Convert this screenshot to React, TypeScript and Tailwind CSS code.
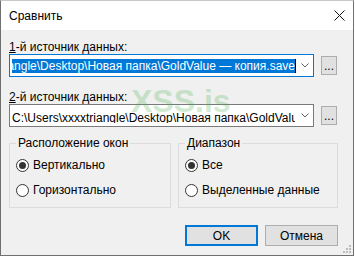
import React from "react";

const PATH_1 = "C:\\Users\\xxxxtriangle\\Desktop\\Новая папка\\GoldValue — копия.save";
const PATH_2 = "C:\\Users\\xxxxtriangle\\Desktop\\Новая папка\\GoldValue — копия.save";

function Chevron() {
  return (
    <svg width="8" height="5" viewBox="0 0 8 5" className="shrink-0">
      <path d="M0.5 0.5 L4 4 L7.5 0.5" fill="none" stroke="#606060" strokeWidth="1" />
    </svg>
  );
}

function Radio({ checked, label }: { checked: boolean; label: string }) {
  return (
    <div className="flex items-center h-[14px]">
      <div className="w-[13px] h-[13px] rounded-full border border-[#333333] bg-white flex items-center justify-center shrink-0">
        {checked && <div className="w-[7px] h-[7px] rounded-full bg-[#333333]" />}
      </div>
      <span className="ml-[4px] leading-[14px]">{label}</span>
    </div>
  );
}

export default function App() {
  return (
    <div className="w-[355px] h-[257px] bg-white font-['Liberation_Sans',Arial,sans-serif] text-[12px] text-black">
      <div className="relative w-[354px] h-[256px] flex flex-col border-l border-r border-b border-t border-[#707070] border-t-[#c8c8c8]">
        {/* title bar */}
        <div className="h-[29px] bg-white flex items-center justify-between pl-[8px] pr-[8px]">
          <span className="leading-[14px]">Сравнить</span>
          <svg width="11" height="11" viewBox="0 0 11 11">
            <path d="M0.5 0.5 L10.5 10.5 M10.5 0.5 L0.5 10.5" stroke="#111" strokeWidth="1" />
          </svg>
        </div>

        {/* body */}
        <div className="flex-1 bg-[#f0f0f0] pl-[8px]">
          <div className="w-[329px] flex flex-col">
            <div className="mt-[10px] leading-[14px] h-[14px]">
              <span className="underline underline-offset-[1px]">1</span>-й источник данных:
            </div>
            <div className="flex items-center">
              <div className="w-[305px] h-[23px] bg-white border border-[#0078d7] flex items-center pl-[2px]">
                <div className="w-[283px] h-[14px] overflow-hidden flex justify-end">
                  <span className="whitespace-nowrap bg-[#0078d7] text-white leading-[14px] shrink-0">{PATH_1}</span>
                </div>
                <div className="w-[1px] h-[14px] bg-black shrink-0" />
                <div className="ml-[5px]">
                  <Chevron />
                </div>
              </div>
              <div className="ml-[7px] w-[16px] h-[19px] bg-[#e1e1e1] border border-[#adadad] flex items-end justify-center leading-[12px] pb-[2px]">
                ...
              </div>
            </div>

            <div className="mt-[13px] leading-[14px] h-[14px]">
              <span className="underline underline-offset-[1px]">2</span>-й источник данных:
            </div>
            <div className="flex items-center">
              <div className="w-[305px] h-[23px] bg-white border border-[#7a7a7a] flex items-center pl-[2px]">
                <div className="w-[283px] h-[14px] overflow-hidden">
                  <span className="whitespace-nowrap leading-[14px]">{PATH_2}</span>
                </div>
                <div className="w-[1px] shrink-0" />
                <div className="ml-[5px]">
                  <Chevron />
                </div>
              </div>
              <div className="ml-[7px] w-[16px] h-[19px] bg-[#e1e1e1] border border-[#adadad] flex items-end justify-center leading-[12px] pb-[2px]">
                ...
              </div>
            </div>

            <div className="mt-[9px] flex">
              <fieldset className="w-[162px] h-[72px] border border-[#dcdcdc] pl-[6px] pt-[8px]">
                <legend className="px-[2px] leading-[14px]">Расположение окон</legend>
                <div className="flex flex-col gap-[11px]">
                  <Radio checked label="Вертикально" />
                  <Radio checked={false} label="Горизонтально" />
                </div>
              </fieldset>
              <fieldset className="ml-[7px] w-[160px] h-[72px] border border-[#dcdcdc] pl-[6px] pt-[8px]">
                <legend className="px-[2px] leading-[14px]">Диапазон</legend>
                <div className="flex flex-col gap-[11px]">
                  <Radio checked label="Все" />
                  <Radio checked={false} label="Выделенные данные" />
                </div>
              </fieldset>
            </div>

            <div className="mt-[17px] flex justify-end gap-[7px]">
              <div className="w-[73px] h-[21px] bg-[#e1e1e1] border-2 border-[#0078d7] flex items-center justify-center">OK</div>
              <div className="w-[73px] h-[21px] bg-[#e1e1e1] border border-[#adadad] flex items-center justify-center">Отмена</div>
            </div>
          </div>
        </div>

        {/* watermark */}
        <div className="absolute left-[130px] top-[82px] text-[32px] font-bold leading-[36px] text-[#4caf50] opacity-25 pointer-events-none">
          XSS.is
        </div>

        {/* resize grip */}
        <svg width="9" height="9" viewBox="0 0 9 9" className="absolute right-[1px] bottom-[1px]">
          <rect x="6" y="0" width="2" height="2" fill="#bcbcbc" />
          <rect x="3" y="3" width="2" height="2" fill="#bcbcbc" />
          <rect x="6" y="3" width="2" height="2" fill="#bcbcbc" />
          <rect x="0" y="6" width="2" height="2" fill="#bcbcbc" />
          <rect x="3" y="6" width="2" height="2" fill="#bcbcbc" />
          <rect x="6" y="6" width="2" height="2" fill="#bcbcbc" />
        </svg>
      </div>
    </div>
  );
}
